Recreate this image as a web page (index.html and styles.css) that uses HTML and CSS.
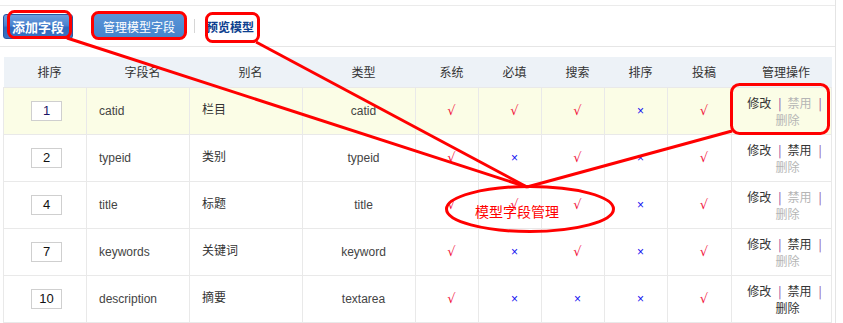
FILE: index.html
```html
<!DOCTYPE html>
<html lang="zh-CN">
<head>
<meta charset="utf-8">
<title>模型字段管理</title>
<link rel="stylesheet" href="styles.css">
</head>
<body>
<div class="page">
  <div class="subnav">
    <a class="btn btn-add">添加字段</a>
    <a class="btn btn-manage">管理模型字段</a>
    <span class="divider"></span>
    <a class="link-preview">预览模型</a>
  </div>
  <table class="grid">
    <colgroup>
      <col class="c1"><col class="c2"><col class="c3"><col class="c4">
      <col class="c5"><col class="c5"><col class="c5"><col class="c5"><col class="c9"><col class="c10">
    </colgroup>
    <thead>
      <tr>
        <th>排序</th><th>字段名</th><th>别名</th><th>类型</th><th>系统</th><th>必填</th><th>搜索</th><th>排序</th><th>投稿</th><th>管理操作</th>
      </tr>
    </thead>
    <tbody>
      <tr class="hover">
        <td class="ord"><span class="num navy">1</span></td>
        <td class="left en">catid</td>
        <td class="left cn">栏目</td>
        <td class="en">catid</td>
        <td><span class="yes">√</span></td><td><span class="yes">√</span></td><td><span class="yes">√</span></td><td><span class="no">×</span></td><td><span class="yes">√</span></td>
        <td class="ops">修改<span class="sep">|</span><span class="off">禁用</span><span class="sep">|</span><br><span class="off">删除</span></td>
      </tr>
      <tr>
        <td class="ord"><span class="num">2</span></td>
        <td class="left en">typeid</td>
        <td class="left cn">类别</td>
        <td class="en">typeid</td>
        <td><span class="yes">√</span></td><td><span class="no">×</span></td><td><span class="yes">√</span></td><td><span class="no">×</span></td><td><span class="yes">√</span></td>
        <td class="ops">修改<span class="sep">|</span>禁用<span class="sep">|</span><br><span class="off">删除</span></td>
      </tr>
      <tr>
        <td class="ord"><span class="num">4</span></td>
        <td class="left en">title</td>
        <td class="left cn">标题</td>
        <td class="en">title</td>
        <td><span class="yes">√</span></td><td><span class="yes">√</span></td><td><span class="yes">√</span></td><td><span class="no">×</span></td><td><span class="yes">√</span></td>
        <td class="ops">修改<span class="sep">|</span><span class="off">禁用</span><span class="sep">|</span><br><span class="off">删除</span></td>
      </tr>
      <tr>
        <td class="ord"><span class="num">7</span></td>
        <td class="left en">keywords</td>
        <td class="left cn">关键词</td>
        <td class="en">keyword</td>
        <td><span class="yes">√</span></td><td><span class="no">×</span></td><td><span class="yes">√</span></td><td><span class="no">×</span></td><td><span class="yes">√</span></td>
        <td class="ops">修改<span class="sep">|</span>禁用<span class="sep">|</span><br><span class="off">删除</span></td>
      </tr>
      <tr>
        <td class="ord"><span class="num">10</span></td>
        <td class="left en">description</td>
        <td class="left cn">摘要</td>
        <td class="en">textarea</td>
        <td><span class="yes">√</span></td><td><span class="no">×</span></td><td><span class="no">×</span></td><td><span class="no">×</span></td><td><span class="yes">√</span></td>
        <td class="ops">修改<span class="sep">|</span>禁用<span class="sep">|</span><br>删除</td>
      </tr>
    </tbody>
  </table>

  <svg class="annot" width="843" height="323" viewBox="0 0 843 323" xmlns="http://www.w3.org/2000/svg">
    <g fill="none" stroke="#f00" stroke-width="3">
      <rect x="8.5" y="11.5" width="62" height="26" rx="6"/>
      <rect x="92.5" y="12.5" width="93" height="26" rx="6"/>
      <rect x="206.5" y="13.5" width="52" height="28" rx="6"/>
      <rect x="731.5" y="84.5" width="97" height="49" rx="8"/>
      <line x1="67" y1="38" x2="527" y2="187"/>
      <line x1="256" y1="42" x2="527" y2="187"/>
      <line x1="732" y1="131" x2="527" y2="187"/>
      <ellipse cx="530" cy="209" rx="83.5" ry="22.5"/>
    </g>
    <text x="517" y="217" class="annot-text" text-anchor="middle">模型字段管理</text>
  </svg>
</div>
</body>
</html>
```

FILE: styles.css
```css
html, body {
  margin: 0;
  padding: 0;
  background: #fff;
}

body {
  font-family: "Liberation Sans", "Noto Sans CJK SC", sans-serif;
  font-size: 12px;
  color: #333;
}

.page {
  position: relative;
  width: 836px;
  height: 323px;
  padding-top: 5px;
  box-sizing: border-box;
  border-right: 1px solid #e4e4e4;
  overflow: hidden;
}

.subnav {
  display: flex;
  align-items: center;
  height: 40px;
  border-top: 1px solid #ebebeb;
  border-bottom: 1px solid #e6e6e6;
}

.btn {
  display: flex;
  align-items: center;
  justify-content: center;
  box-sizing: border-box;
  color: #fff;
  font-family: "Noto Sans CJK SC", sans-serif;
}

.btn-add {
  margin-left: 3px;
  width: 70px;
  height: 25px;
  border: 1px solid #2857a3;
  border-radius: 3px;
  background: linear-gradient(#6d9ddd 0%, #4a83cf 45%, #2f69bd 55%, #3a73c4 100%);
  font-size: 13px;
  font-weight: bold;
}

.btn-manage {
  margin-left: 20px;
  width: 92px;
  height: 24px;
  border-radius: 2px;
  background: linear-gradient(#5a95d8, #4483cc);
  font-size: 12px;
}

.divider {
  width: 1px;
  height: 14px;
  margin-left: 9px;
  background: #d6d6d6;
}

.link-preview {
  margin-left: 11px;
  color: #0d3f8f;
  font-family: "Noto Sans CJK SC", sans-serif;
  font-size: 12px;
  font-weight: bold;
}

.grid {
  margin: 10px 0 0 3px;
  width: 829px;
  border-collapse: collapse;
  table-layout: fixed;
}

.c1 { width: 83px; }
.c2 { width: 103px; }
.c3 { width: 113px; }
.c4 { width: 113px; }
.c5 { width: 63px; }
.c9 { width: 64px; }
.c10 { width: 100px; }

.grid thead tr {
  height: 30px;
}

.grid th {
  padding: 0 0 0 9px;
  background: #edf2f7;
  font-weight: normal;
  font-size: 12px;
  line-height: 16px;
  color: #333;
  text-align: center;
  font-family: "Noto Sans CJK SC", sans-serif;
}

.grid tbody tr {
  height: 47px;
}

.grid td {
  padding: 0 0 0 9px;
  border: 1px solid #e9e9e9;
  text-align: center;
  vertical-align: middle;
  color: #444;
  line-height: 16px;
}

.grid tr.hover td {
  background: #fbfde6;
}

.grid td.left {
  text-align: left;
  padding-left: 12px;
}

.grid td.cn {
  font-family: "Noto Sans CJK SC", sans-serif;
  color: #333;
  padding-bottom: 3px;
}

.grid td.en {
  font-size: 12px;
  color: #444;
}

.grid td.ord {
  padding-left: 3px;
}

.num {
  display: inline-block;
  vertical-align: middle;
  box-sizing: border-box;
  width: 31px;
  height: 20px;
  line-height: 18px;
  border: 1px solid #cfcfcf;
  background: #fff;
  color: #111;
  font-size: 13px;
  text-align: center;
}

.num.navy {
  color: #1a1466;
}

.yes {
  color: #f2173f;
  font-family: "DejaVu Sans", sans-serif;
  font-size: 13px;
}

.no {
  color: #1010f0;
  font-family: "Liberation Sans", sans-serif;
  font-size: 12px;
}

.grid td.ops {
  padding-left: 12px;
  line-height: 17px;
  color: #333;
  font-family: "Noto Sans CJK SC", sans-serif;
  font-size: 12px;
}

.sep {
  padding: 0 6px 0 7px;
  color: #8a3f9a;
}

.off {
  color: #b5b5b5;
}

.annot {
  position: absolute;
  left: 0;
  top: 0;
  pointer-events: none;
}

.annot-text {
  fill: #f00;
  font-family: "Noto Sans CJK SC", sans-serif;
  font-size: 14px;
}
```
